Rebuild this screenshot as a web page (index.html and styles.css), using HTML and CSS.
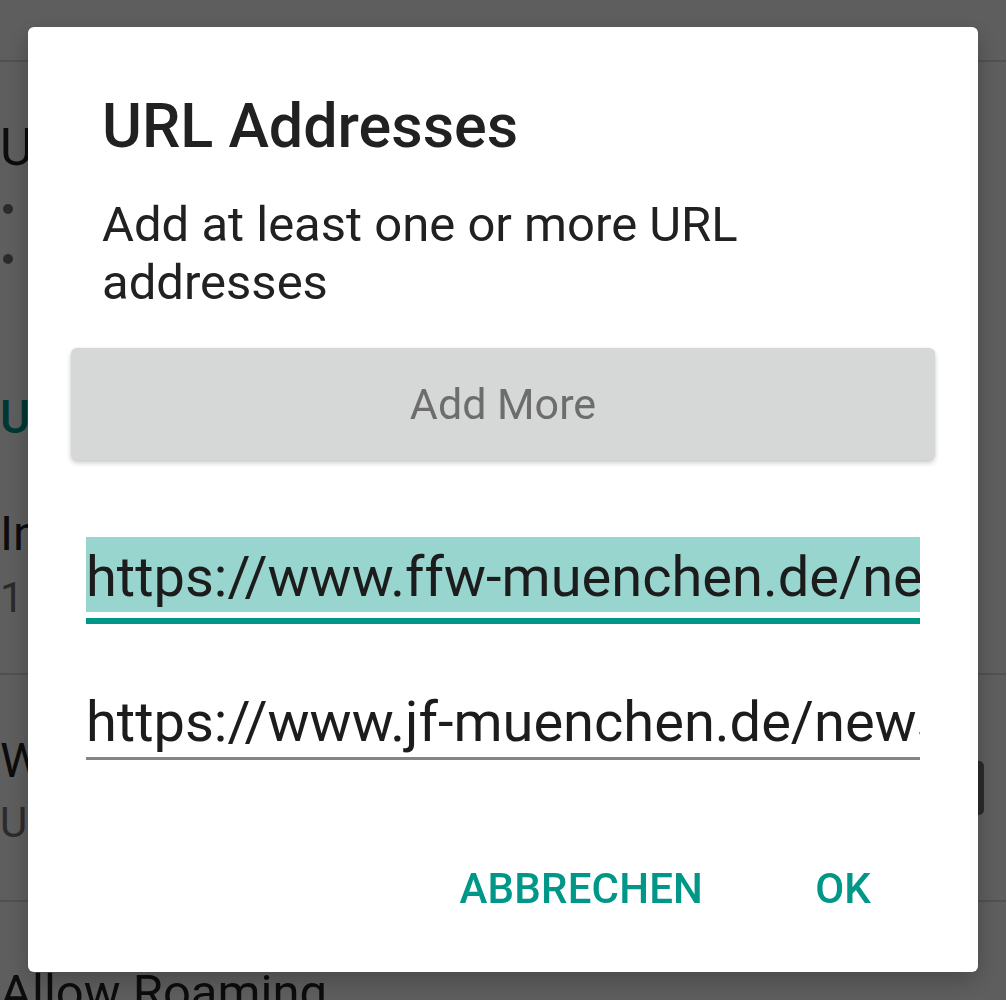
FILE: index.html
```html
<!DOCTYPE html>
<html lang="en">
<head>
<meta charset="utf-8">
<title>URL Addresses</title>
<link rel="stylesheet" href="styles.css">
</head>
<body>
<div class="page">
  <header class="appbar"></header>
  <section class="group group-urls">
    <div class="pref-title pref-title-big">URLs</div>
    <ul class="bullets">
      <li>https://www.ffw-muenchen.de/news</li>
      <li>https://www.jf-muenchen.de/news</li>
    </ul>
    <div class="category">Update</div>
    <div class="pref-title interval">Interval</div>
    <div class="pref-summary">1 Stunde</div>
  </section>
  <section class="group group-wlan">
    <div class="pref-texts">
      <div class="pref-title">WLAN only</div>
      <div class="pref-summary">Update only via WLAN</div>
    </div>
    <span class="checkbox"></span>
  </section>
  <section class="group group-roaming">
    <div class="pref-title">Allow Roaming</div>
  </section>
</div>

<div class="scrim">
  <div class="dialog">
    <h1 class="dialog-title">URL Addresses</h1>
    <p class="dialog-message">Add at least one or more URL addresses</p>
    <button class="add-more" type="button">Add More</button>
    <div class="field field-focused">
      <div class="field-text field-selected">https://www.ffw-muenchen.de/news</div>
    </div>
    <div class="field field-plain">
      <div class="field-text">https://www.jf-muenchen.de/news</div>
    </div>
    <div class="actions">
      <button class="action" type="button">ABBRECHEN</button>
      <button class="action" type="button">OK</button>
    </div>
  </div>
</div>
</body>
</html>
```

FILE: styles.css
```css
* {
  box-sizing: border-box;
}

html,
body {
  margin: 0;
  height: 100%;
  overflow: hidden;
}

body {
  font-family: Roboto, "Noto Sans", "Liberation Sans", sans-serif;
  background: #ffffff;
  color: #212121;
}

/* ---------- underlying settings page ---------- */
.page {
  height: 100vh;
  overflow: hidden;
}

.appbar {
  height: 62px;
  border-bottom: 2px solid #dadada;
}

.group {
  border-bottom: 2px solid #dadada;
}

.group-urls {
  padding: 56px 0 50px;
}

.pref-title {
  font-size: 48px;
  line-height: 56px;
  color: #212121;
  white-space: nowrap;
}

.pref-title-big {
  font-size: 51px;
  line-height: 60px;
}

.pref-summary {
  margin-top: 11px;
  font-size: 42px;
  line-height: 50px;
  color: #757575;
  white-space: nowrap;
}

.bullets {
  list-style: none;
  margin: 6px 0 0;
  padding: 0;
}

.bullets li {
  display: flex;
  align-items: center;
  gap: 30px;
  height: 50px;
  font-size: 40px;
  color: #757575;
  white-space: nowrap;
}

.bullets li::before {
  content: "";
  width: 10px;
  height: 10px;
  margin-left: 3px;
  border-radius: 50%;
  background: #757575;
  flex: none;
}

.category {
  margin-top: 106px;
  font-size: 46px;
  line-height: 54px;
  font-weight: 500;
  color: #009688;
}

.interval {
  margin-top: 62px;
}

.group-wlan {
  display: flex;
  align-items: center;
  justify-content: space-between;
  padding: 58px 22px 52px 0;
}

.group-wlan .pref-summary {
  margin-top: 9px;
}

.checkbox {
  width: 54px;
  height: 54px;
  margin-top: -6px;
  border: 6px solid #757575;
  border-radius: 5px;
}

.group-roaming {
  padding-top: 63px;
  border-bottom: 0;
}

.group-roaming .pref-title {
  font-size: 49px;
}

/* ---------- dialog ---------- */
.scrim {
  position: fixed;
  inset: 0;
  background: rgba(0, 0, 0, 0.63);
  display: flex;
  justify-content: center;
  align-items: flex-start;
  padding-top: 27px;
}

.dialog {
  width: 950px;
  background: #ffffff;
  border-radius: 6px;
  padding: 64px 0 59px;
  box-shadow: 0 8px 24px rgba(0, 0, 0, 0.25);
}

.dialog-title {
  margin: 0;
  padding: 0 74px;
  font-size: 61px;
  line-height: 70px;
  font-weight: 500;
  color: #212121;
}

.dialog-message {
  margin: 35px 0 0;
  padding: 0 74px;
  font-size: 49px;
  line-height: 58px;
  color: #212121;
}

.add-more {
  display: flex;
  align-items: center;
  justify-content: center;
  width: 864px;
  height: 112px;
  margin: 36px 43px 0;
  padding: 0;
  border: 0;
  border-radius: 6px;
  background: #d6d7d7;
  box-shadow: 0 3px 5px rgba(0, 0, 0, 0.2), 0 0 2px rgba(0, 0, 0, 0.08);
  font-family: inherit;
  font-size: 43px;
  color: #6d6d6d;
}

.field {
  margin: 0 58px;
  overflow: hidden;
  white-space: nowrap;
  font-size: 56px;
}

.field-focused {
  margin-top: 77px;
  padding-bottom: 6px;
  border-bottom: 6px solid #009688;
}

.field-plain {
  margin-top: 58px;
  border-bottom: 3px solid #858585;
}

.field-text {
  height: 75px;
  padding-top: 5px;
  line-height: 70px;
  color: #1c1c1c;
}

.field-selected {
  background: #98d5ce;
}

.actions {
  display: flex;
  justify-content: flex-end;
  gap: 112px;
  margin-top: 104px;
  padding-right: 107px;
}

.action {
  padding: 0;
  border: 0;
  background: none;
  font-family: inherit;
  font-size: 42px;
  line-height: 49px;
  font-weight: 500;
  letter-spacing: 0.2px;
  color: #009688;
}
```
